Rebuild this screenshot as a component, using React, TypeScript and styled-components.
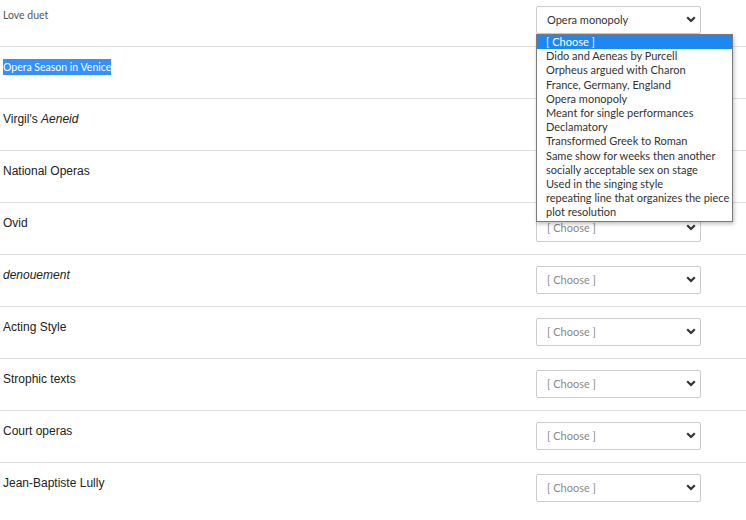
import styled, { createGlobalStyle } from 'styled-components';

const GlobalStyle = createGlobalStyle`
   html, body {
      margin: 0;
      padding: 0;
      background: #ffffff;
      overflow: hidden;
   }
`;

const Page = styled.div`
   width: 746px;
   height: 520px;
   overflow: hidden;
`;

const List = styled.div`
   margin-top: -5px;
   display: flex;
   flex-direction: column;
`;

const Row = styled.div`
   height: 51px;
   border-bottom: 1px solid #dedede;
   display: flex;
   align-items: flex-start;
   justify-content: space-between;

   &:last-child {
      border-bottom: none;
   }
`;

const Label = styled.div<{ $lato?: boolean }>`
   padding-left: 3px;
   padding-top: 13px;
   font-family: ${(p) => (p.$lato ? 'Lato, "Open Sans", sans-serif' : '"Liberation Sans", Arial, sans-serif')};
   font-size: ${(p) => (p.$lato ? '10.5px' : '12px')};
   line-height: 14px;
   color: ${(p) => (p.$lato ? '#555555' : '#222222')};
`;

const Highlight = styled.span`
   background: #3390ff;
   color: #ffffff;
   padding: 2px 0 2px;
`;

const SelectWrap = styled.div`
   position: relative;
   margin-top: 11px;
   margin-right: 45px;
`;

const SelectBox = styled.div<{ $placeholder?: boolean }>`
   height: 26px;
   border: 1px solid #cccccc;
   border-radius: 2px;
   background: #ffffff;
   display: flex;
   align-items: center;
   justify-content: space-between;
   padding: 0 4px 1px 10px;
   box-sizing: border-box;
   height: 28px;
   width: 165px;
   font-family: Lato, "Open Sans", sans-serif;
   font-size: 11px;
   color: ${(p) => (p.$placeholder ? '#8a8a8a' : '#333333')};
`;

const Chevron = styled.svg`
   width: 10px;
   height: 7px;
   flex: none;
`;

const Menu = styled.div`
   position: absolute;
   top: 28px;
   left: 0;
   width: 195px;
   padding-bottom: 2px;
   border: 1px solid #7a7a7a;
   background: #ffffff;
   box-shadow: 1px 2px 4px rgba(0, 0, 0, 0.25);
   z-index: 2;
`;

const Option = styled.div<{ $active?: boolean }>`
   height: 14.2px;
   line-height: 14.2px;
   padding-left: 9px;
   font-family: Lato, "Open Sans", sans-serif;
   font-size: 11px;
   white-space: nowrap;
   color: ${(p) => (p.$active ? '#ffffff' : '#333333')};
   background: ${(p) => (p.$active ? '#1e88f0' : 'transparent')};
`;

const options = [
   '[ Choose ]',
   'Dido and Aeneas by Purcell',
   'Orpheus argued with Charon',
   'France, Germany, England',
   'Opera monopoly',
   'Meant for single performances',
   'Declamatory',
   'Transformed Greek to Roman',
   'Same show for weeks then another',
   'socially acceptable sex on stage',
   'Used in the singing style',
   'repeating line that organizes the piece',
   'plot resolution',
];

function Select({ value, open }: { value?: string; open?: boolean }) {
   return (
      <SelectWrap>
         <SelectBox $placeholder={!value}>
            <span>{value ?? '[ Choose ]'}</span>
            <Chevron viewBox="0 0 10 7">
               <polyline points="1.2,1.2 5,5 8.8,1.2" fill="none" stroke="#333" strokeWidth="2.2" />
            </Chevron>
         </SelectBox>
         {open && (
            <Menu>
               {options.map((o, i) => (
                  <Option key={o} $active={i === 0}>
                     {o}
                  </Option>
               ))}
            </Menu>
         )}
      </SelectWrap>
   );
}

export default function App() {
   return (
      <Page>
         <GlobalStyle />
         <List>
            <Row>
               <Label $lato>Love duet</Label>
               <Select value="Opera monopoly" open />
            </Row>
            <Row>
               <Label $lato>
                  <Highlight>Opera Season in Venice</Highlight>
               </Label>
               <Select />
            </Row>
            <Row>
               <Label>
                  Virgil's <i>Aeneid</i>
               </Label>
               <Select />
            </Row>
            <Row>
               <Label>National Operas</Label>
               <Select />
            </Row>
            <Row>
               <Label>Ovid</Label>
               <Select />
            </Row>
            <Row>
               <Label>
                  <i>denouement</i>
               </Label>
               <Select />
            </Row>
            <Row>
               <Label>Acting Style</Label>
               <Select />
            </Row>
            <Row>
               <Label>Strophic texts</Label>
               <Select />
            </Row>
            <Row>
               <Label>Court operas</Label>
               <Select />
            </Row>
            <Row>
               <Label>Jean-Baptiste Lully</Label>
               <Select />
            </Row>
         </List>
      </Page>
   );
}
